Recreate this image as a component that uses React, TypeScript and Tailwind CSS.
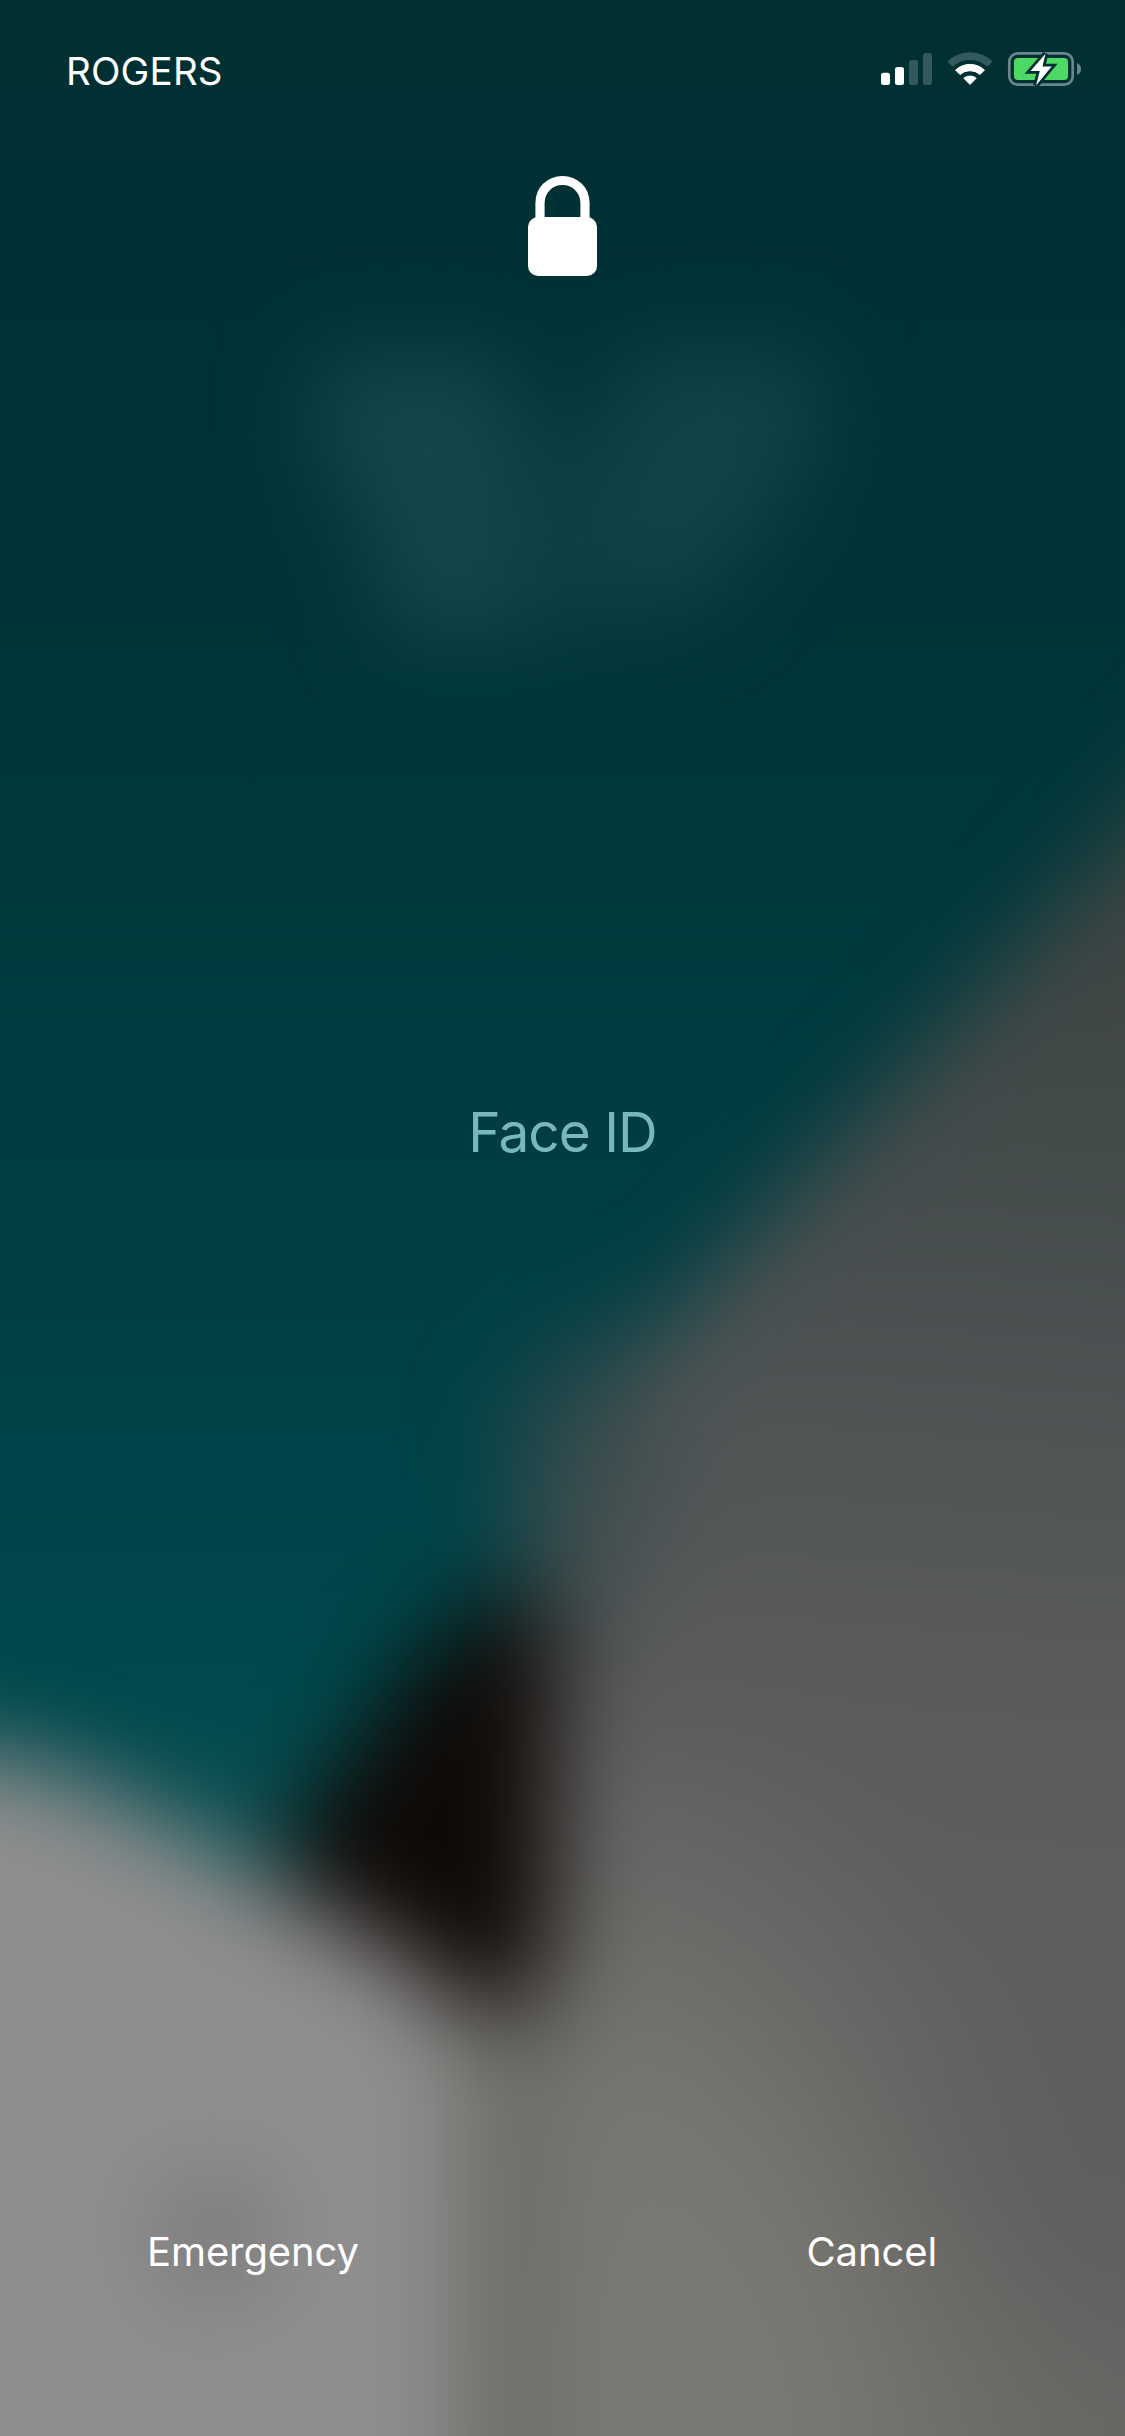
function Wallpaper() {
  return (
    <svg className="absolute inset-0 h-full w-full" viewBox="0 0 1125 2436" aria-hidden="true">
      <defs>
        <linearGradient id="sky" gradientUnits="userSpaceOnUse" x1="0" y1="0" x2="0" y2="1850">
          <stop offset="0" stopColor="#002f32" />
          <stop offset="0.35" stopColor="#003538" />
          <stop offset="0.6" stopColor="#003c40" />
          <stop offset="0.8" stopColor="#004348" />
          <stop offset="0.9" stopColor="#00484c" />
          <stop offset="1" stopColor="#0a5053" />
        </linearGradient>
        <linearGradient id="wall" gradientUnits="userSpaceOnUse" x1="1125" y1="820" x2="1005" y2="2436">
          <stop offset="0" stopColor="#3a4240" />
          <stop offset="0.2" stopColor="#444b4b" />
          <stop offset="0.4" stopColor="#505556" />
          <stop offset="0.54" stopColor="#5b5b5b" />
          <stop offset="0.7" stopColor="#605f60" />
          <stop offset="0.85" stopColor="#605e5e" />
          <stop offset="1" stopColor="#6a6865" />
        </linearGradient>
        <radialGradient id="warm" gradientUnits="userSpaceOnUse" cx="0" cy="0" r="1" gradientTransform="translate(650 2390) rotate(-8) scale(430 740)">
          <stop offset="0" stopColor="#7b7a75" />
          <stop offset="0.4" stopColor="#7a7973" stopOpacity="0.9" />
          <stop offset="0.7" stopColor="#787771" stopOpacity="0.4" />
          <stop offset="1" stopColor="#787771" stopOpacity="0" />
        </radialGradient>
        <filter id="soft" filterUnits="userSpaceOnUse" x="-300" y="-300" width="1725" height="3036" colorInterpolationFilters="sRGB">
          <feGaussianBlur stdDeviation="47" />
        </filter>
        <filter id="digits" filterUnits="userSpaceOnUse" x="0" y="0" width="1125" height="1000" colorInterpolationFilters="sRGB">
          <feGaussianBlur stdDeviation="45" />
        </filter>
      </defs>
      <rect width="1125" height="2436" fill="url(#sky)" />
      <g filter="url(#digits)" fill="#13474a">
        <path d="M315 355H515V640H395L365 520L315 450Z" />
        <path d="M515 430H600V640H515Z" opacity="0.5" />
        <path d="M620 350H820V450L770 520L700 610H600V480Z" opacity="0.85" />
      </g>
      <g filter="url(#soft)">
        <path d="M1500 390L1125 830L930 1042L700 1285L580 1430L535 1510L530 1600L540 1950L380 2000V2800H1500Z" fill="url(#wall)" />
        <path d="M500 1400L620 1300L670 1480L600 1660H530Z" fill="#384a4b" opacity="0.65" />
        <path d="M440 1750H1125V2800H440Z" fill="url(#warm)" />
        <path d="M400 1960H545V2800H400Z" fill="#6b6a64" />
        <path d="M510 1575L410 1665L270 1860L380 1970L530 2020L554 1920L554 1630Z" fill="#0f0a08" />
        <path d="M-300 1755H0L80 1782L200 1842L320 1912L405 1955L460 2035V2800H-300Z" fill="#8f8e8e" />
        <path d="M150 2190L250 2170L280 2270L180 2310Z" fill="#7a7879" />
      </g>
    </svg>
  );
}

function StatusIcons() {
  return (
    <svg className="mt-[49px] h-[42px] w-[204px]" viewBox="879 49 204 42" aria-label="Signal, Wi-Fi and battery charging">
      <g fill="#fff">
        <rect x="881" y="72.700" width="9" height="12.300" rx="2.500" />
        <rect x="895" y="67" width="9" height="18" rx="2.500" />
        <rect x="909" y="60" width="9" height="25" rx="2.500" opacity="0.2" />
        <rect x="923" y="53" width="9" height="32" rx="2.500" opacity="0.2" />
      </g>
      <path d="M947.900 61.500A32.500 32.500 0 0 1 992.100 61.500L987.400 66.200A26 26 0 0 0 952.600 66.200Z" fill="#fff" stroke="#fff" strokeLinejoin="round" opacity="0.2" />
      <path d="M955.600 70.100A21 21 0 0 1 984.400 70.100L980 74.500A15 15 0 0 0 960 74.500Z" fill="#fff" stroke="#fff" strokeLinejoin="round" />
      <path d="M963.800 78.200A10 10 0 0 1 976.200 78.200L970 84.400Z" fill="#fff" stroke="#fff" strokeLinejoin="round" />
      <rect x="1009.300" y="53.300" width="63.400" height="31.400" rx="8.500" fill="none" stroke="#fff" strokeOpacity="0.42" strokeWidth="2.700" />
      <path d="M1077 63C1082.400 65 1082.400 73 1077 75Z" fill="#fff" opacity="0.42" />
      <rect x="1014" y="58" width="54" height="22" rx="4" fill="#4cd964" />
      <path d="M1045.500 53.800L1030.500 71H1039.800L1036 85.500L1051.700 66.600H1042.500Z" fill="#002f33" stroke="#002f33" strokeWidth="5.500" />
      <path d="M1045.500 53.800L1030.500 71H1039.800L1036 85.500L1051.700 66.600H1042.500Z" fill="#fff" />
    </svg>
  );
}

function Lock() {
  return (
    <svg className="h-[102px] w-[70px]" viewBox="528 175 70 102" aria-label="Locked">
      <path d="M540 222V203C540 190 550 180.500 562.500 180.500S585 190 585 203V222" fill="none" stroke="#fff" strokeWidth="9.200" />
      <rect x="528" y="217" width="69" height="59" rx="10" fill="#fff" />
    </svg>
  );
}

export default function App() {
  return (
    <main className="relative isolate flex h-[2436px] w-[1125px] flex-col overflow-hidden bg-[#002f32] font-['Inter',sans-serif] text-white">
      <Wallpaper />
      <header className="relative flex h-[175px] justify-between pl-[66px] pr-[42px]">
        <span className="mt-[47px] text-[38.500px] leading-[48px] tracking-[0.2px]">ROGERS</span>
        <StatusIcons />
      </header>
      <div className="relative flex justify-center">
        <Lock />
      </div>
      <h1 className="relative mt-[820px] text-center text-[55px] leading-[70px] font-normal tracking-[-1px] text-[#78b8bc]">
        Face ID
      </h1>
      <footer className="relative mt-auto mb-[154px] flex justify-between pl-[147px] pr-[188px] text-[40px] leading-[60px] tracking-[-0.1px]">
        <button>Emergency</button>
        <button>Cancel</button>
      </footer>
    </main>
  );
}
